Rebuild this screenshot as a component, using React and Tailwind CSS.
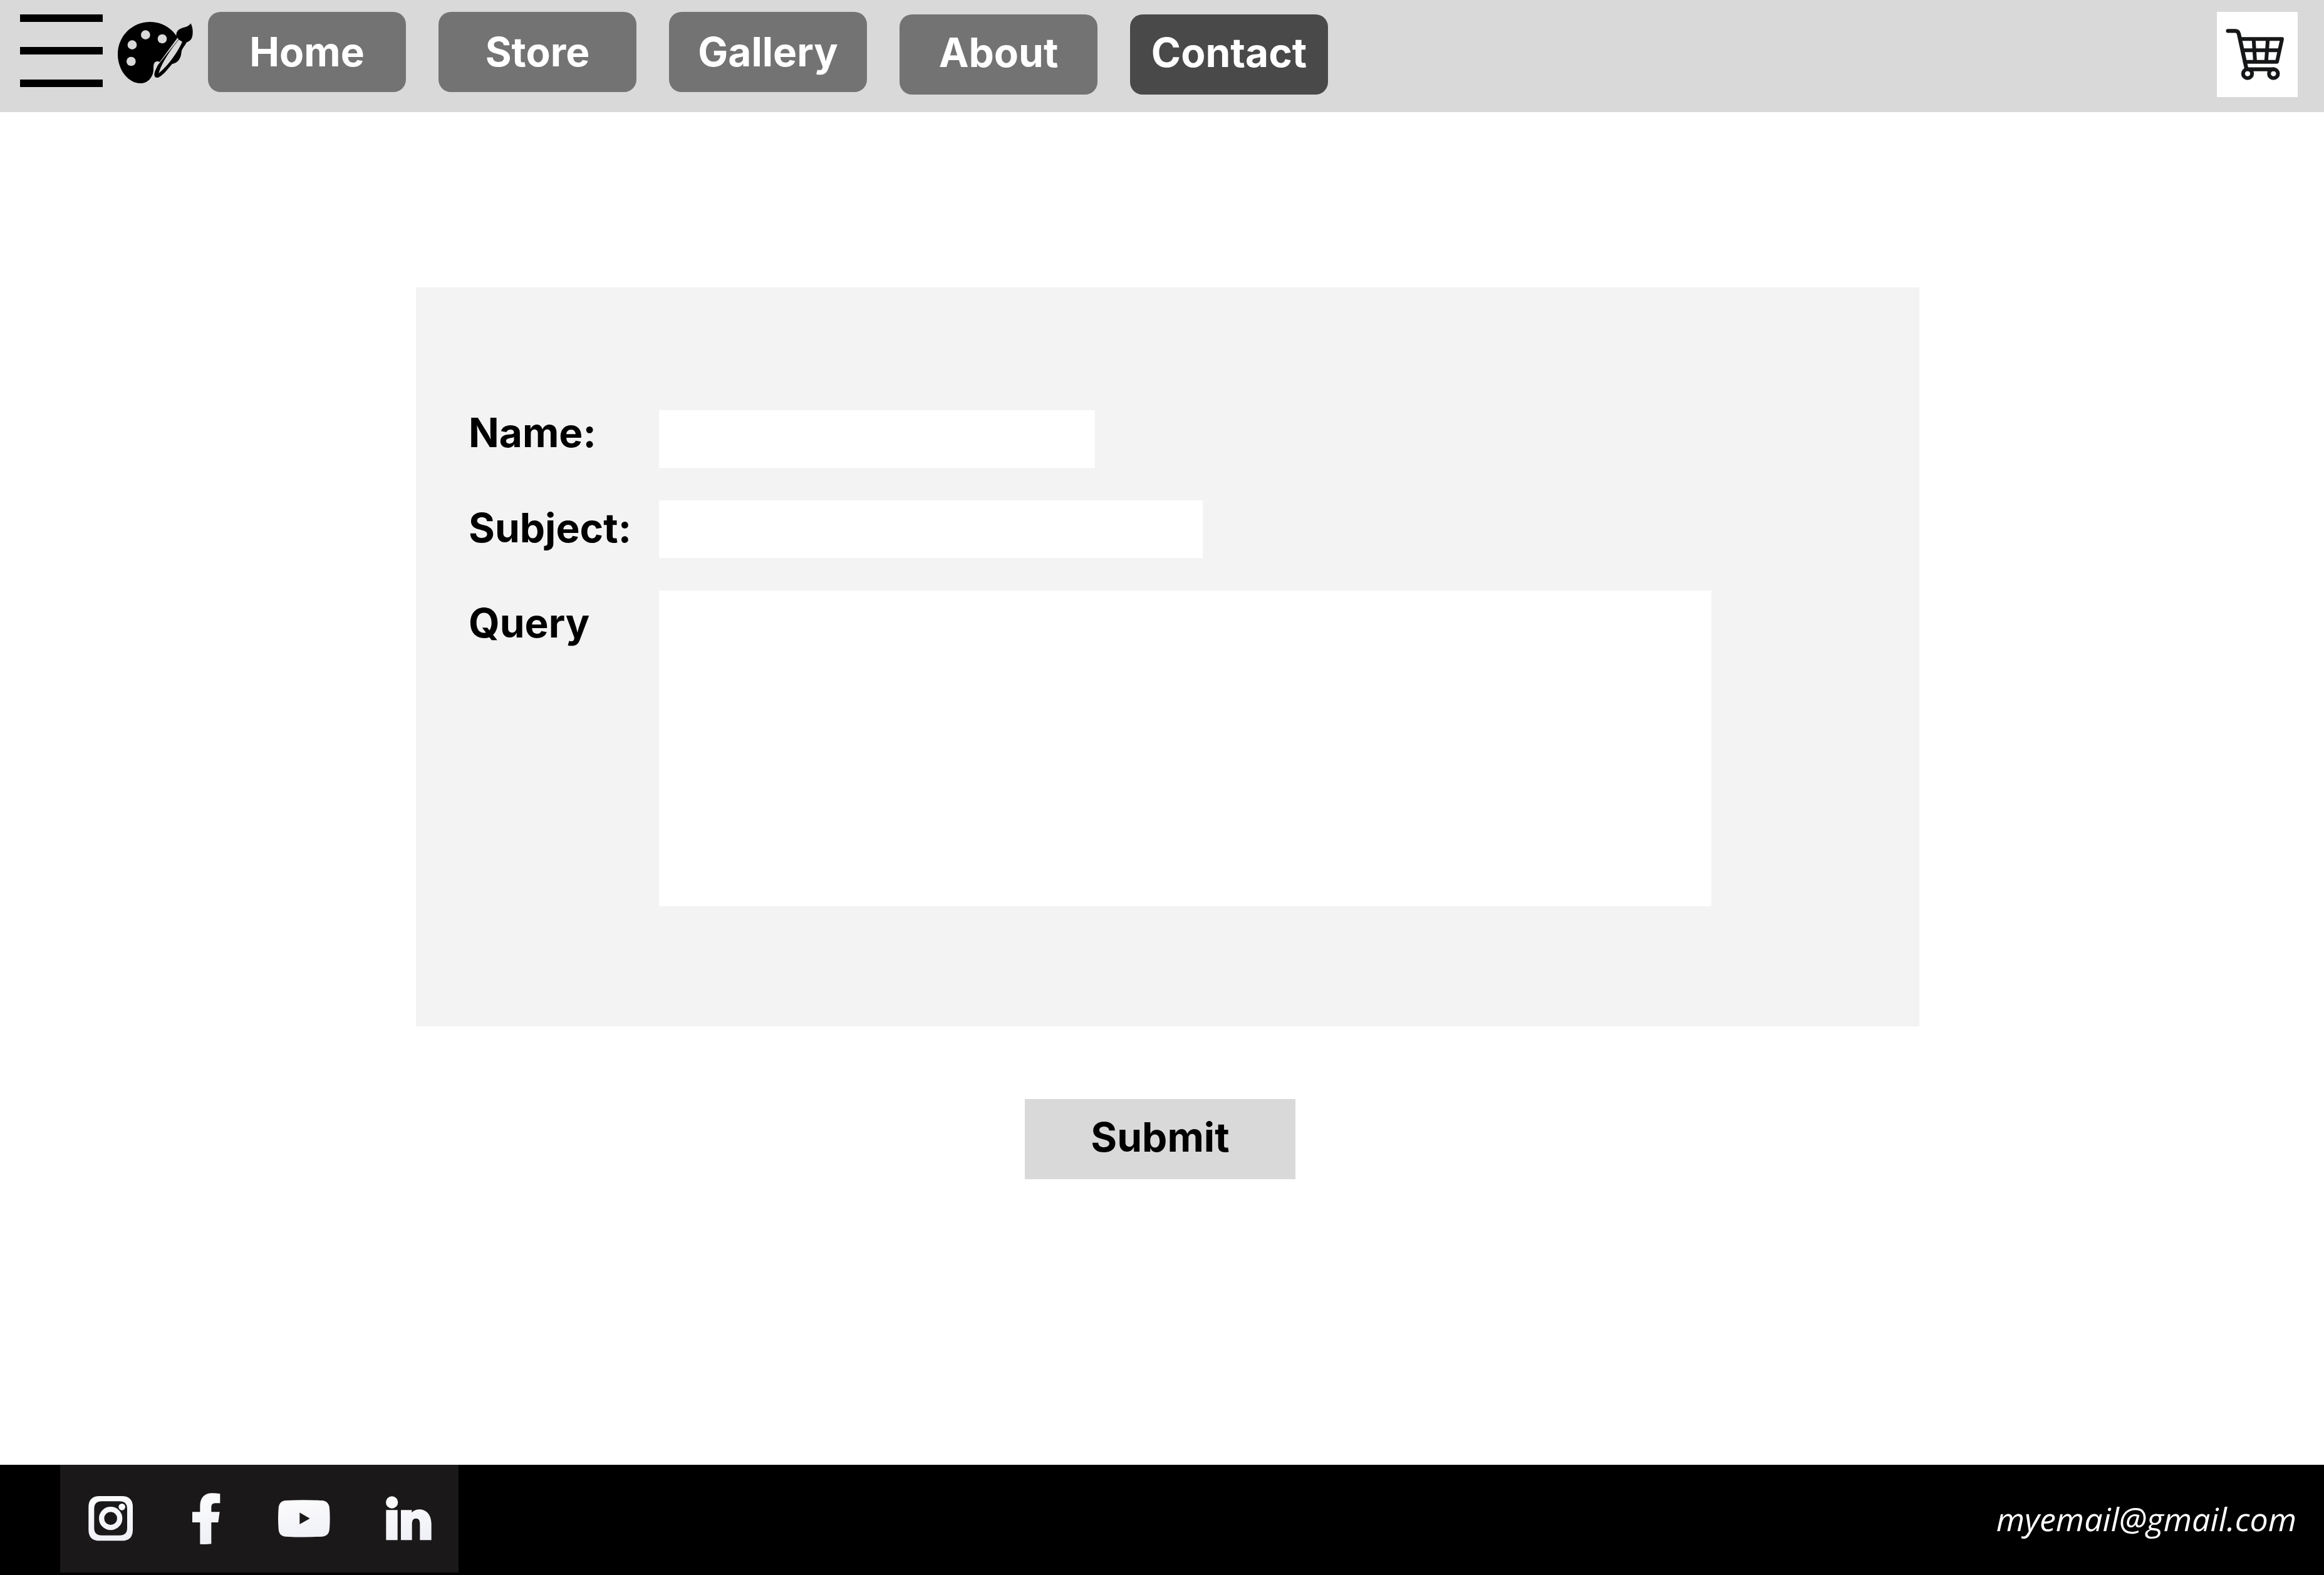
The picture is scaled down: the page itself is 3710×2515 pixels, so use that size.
const navMain = ["Home", "Store", "Gallery"];
const navButton =
  "flex h-32 w-[316px] items-center justify-center rounded-[20px] text-[64px] leading-[72px] font-bold text-white";

function MenuButton() {
  return (
    <button type="button" aria-label="Menu" className="flex w-[132px] shrink-0 flex-col gap-10 pt-[23px]">
      <span className="h-3 w-full bg-black" />
      <span className="h-3 w-full bg-black" />
      <span className="h-3 w-full bg-black" />
    </button>
  );
}

function PaletteLogo() {
  return (
    <svg viewBox="18 -60 432 537" className="h-[179px] w-36 shrink-0" role="img" aria-label="Art palette">
      <path d="M210 45C120 45 54 115 54 200C54 275 105 339 163 339C200 339 225 306 225 272C225 250 226 235 243 234Q250 233 255 237L341 120C310 72 265 45 210 45Z" />
      <path d="M404 52C409 65 413 75 413 90C413 120 408 134 383 143C376 160 360 172 359 190C356 222 342 241 314 247C296 268 275 297 254 308C243 315 230 312 229 299C229 285 237 271 246 252L345 128L334 112C334 92 342 81 362 74C380 70 392 67 404 52Z" />
      <path d="M346 130L363 140C345 180 305 245 250 291C262 245 305 180 346 130Z" fill="#d9d9d9" />
      <g fill="#d9d9d9">
        <circle cx="187" cy="107" r="22" />
        <circle cx="267" cy="126" r="22" />
        <circle cx="123" cy="155" r="22" />
        <circle cx="118" cy="234" r="22" />
      </g>
    </svg>
  );
}

function CartIcon() {
  return (
    <svg viewBox="90 57 387 408" className="h-[136px] w-[129px]" fill="none" stroke="#161718" strokeLinecap="round" strokeLinejoin="round" aria-hidden="true">
      <path strokeWidth="19" d="M143 148H178Q192 148 195 162L230 322Q232 332 244 332H362" />
      <path strokeWidth="18" d="M202 187H402L378 296H224M213 241H388" />
      <path strokeWidth="18" strokeLinecap="butt" d="M266 187L273 296M334 187L326 296" />
      <circle cx="237" cy="353" r="21.500" strokeWidth="18" />
      <circle cx="361" cy="353" r="21.500" strokeWidth="18" />
    </svg>
  );
}

const socials = [
  {
    label: "Instagram",
    art: (
      <>
        <path
          fillRule="evenodd"
          d="M189 147H295Q348 147 348 200V308Q348 361 295 361H189Q136 361 136 308V200Q136 147 189 147ZM199 172Q163 172 163 208V300Q163 335 199 335H285Q321 335 321 300V208Q321 172 285 172Z"
        />
        <circle cx="242" cy="254" r="43.500" fill="none" stroke="url(#ink)" strokeWidth="25" />
        <circle cx="296" cy="199" r="16" />
      </>
    ),
  },
  {
    label: "Facebook",
    art: (
      <path d="M193 377V273H156V223H193V195C193 155 215 133 250 133Q272 133 289 136V181H266Q247 181 247 200V223H287L280 273H247V376Q220 379 193 377Z" />
    ),
  },
  {
    label: "YouTube",
    art: (
      <path
        fillRule="evenodd"
        d="M128 168Q213 163 298 168Q333 170 336 205Q340 254 336 305Q333 339 298 341Q213 346 128 341Q94 339 92 305Q88 254 92 205Q94 170 128 168ZM193 226V282L242 254Z"
      />
    ),
  },
  {
    label: "LinkedIn",
    art: (
      <>
        <circle cx="158" cy="177" r="29" />
        <path d="M130 214H185V358H130ZM201 214H253V226Q268 211 290 211C325 211 347 240 347 280V358H292V278Q292 254 273 254Q254 254 254 278V358H201Z" />
      </>
    ),
  },
];

function Socials() {
  return (
    <nav aria-label="Social media" className="grid h-[172px] w-[636px] shrink-0 grid-cols-4 bg-[#1a1819]">
      {socials.map((s) => (
        <a key={s.label} href="#" aria-label={s.label} className="block">
          <svg viewBox="0 -3 477 516" className="h-[172px] w-full" fill="url(#ink)">
            <defs>
              <linearGradient id="ink" gradientUnits="userSpaceOnUse" x1="200" y1="140" x2="240" y2="370">
                <stop offset="0" stopColor="#fcfcfd" />
                <stop offset="1" stopColor="#eff0f6" />
              </linearGradient>
            </defs>
            {s.art}
          </svg>
        </a>
      ))}
    </nav>
  );
}

export default function App() {
  return (
    <div className="flex min-h-screen flex-col bg-white font-['Inter',sans-serif] text-black">
      <header className="flex h-[179px] items-start bg-[#d9d9d9] pr-[42px] pl-8">
        <div className="flex gap-3">
          <MenuButton />
          <PaletteLogo />
          <nav aria-label="Main" className="flex gap-[52px] pt-[19px]">
            {navMain.map((label) => (
              <button key={label} type="button" className={`${navButton} bg-[#737373]`}>
                {label}
              </button>
            ))}
            <div className="flex gap-[52px] pt-1">
              <button type="button" className={`${navButton} bg-[#737373] pb-1.5`}>
                About
              </button>
              <button type="button" aria-current="page" className={`${navButton} bg-[#494949] pb-1.5`}>
                Contact
              </button>
            </div>
          </nav>
        </div>
        <button type="button" aria-label="Cart" className="mt-[19px] ml-auto bg-white">
          <CartIcon />
        </button>
      </header>

      <main className="flex-1">
        <form className="flex flex-col items-center gap-[116px] pt-[280px]" onSubmit={(e) => e.preventDefault()}>
          <div className="flex w-full justify-center pl-[18px]">
            <div className="flex w-full max-w-[2400px] bg-[#f3f3f3] pt-[196px] pr-[332px] pb-48 pl-[84px]">
              <div className="flex w-[304px] shrink-0 flex-col gap-20 text-[64px] leading-[72px] font-bold">
                <label htmlFor="name">Name:</label>
                <label htmlFor="subject">Subject:</label>
                <label htmlFor="query">Query</label>
              </div>
              <div className="flex min-w-0 flex-1 flex-col gap-[52px] text-5xl">
                <input id="name" type="text" className="h-[92px] w-full max-w-[696px] bg-white px-6" />
                <input id="subject" type="text" className="h-[92px] w-full max-w-[868px] bg-white px-6" />
                <textarea id="query" className="h-[504px] w-full resize-none bg-white p-6" />
              </div>
            </div>
          </div>
          <div className="flex w-full justify-center pr-1.5">
            <button type="submit" className="h-32 w-[432px] bg-[#d9d9d9] pb-1.5 text-[64px] leading-[72px] font-bold">
              Submit
            </button>
          </div>
        </form>
      </main>

      <footer className="flex h-44 items-start justify-between bg-black pr-11 pb-1 pl-24">
        <Socials />
        <a
          href="mailto:myemail@gmail.com"
          className="self-center font-['Open_Sans',sans-serif] text-[52px] leading-[72px] text-white italic"
        >
          myemail@gmail.com
        </a>
      </footer>
    </div>
  );
}
